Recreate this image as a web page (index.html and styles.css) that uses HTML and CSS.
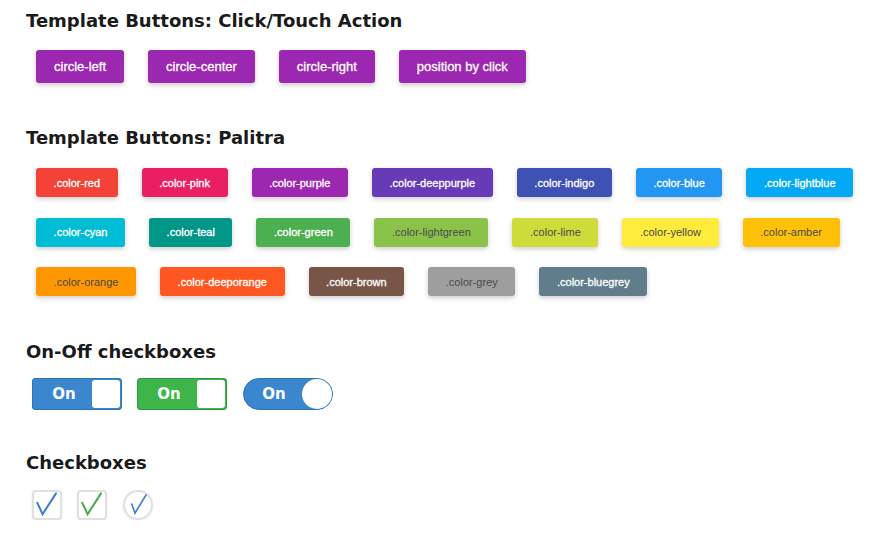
FILE: index.html
```html
<!DOCTYPE html>
<html>
<head>
<meta charset="utf-8">
<link rel="stylesheet" href="styles.css">
</head>
<body>
<div class="page">
  <h2 class="title t1">Template Buttons: Click/Touch Action</h2>
  <div class="actions">
    <span class="btn">circle-left</span>
    <span class="btn">circle-center</span>
    <span class="btn">circle-right</span>
    <span class="btn">position by click</span>
  </div>

  <h2 class="title t2">Template Buttons: Palitra</h2>
  <div class="palette">
    <div class="prow">
      <span class="pb red">.color-red</span>
      <span class="pb pink">.color-pink</span>
      <span class="pb purple">.color-purple</span>
      <span class="pb deeppurple">.color-deeppurple</span>
      <span class="pb indigo">.color-indigo</span>
      <span class="pb blue">.color-blue</span>
      <span class="pb lightblue">.color-lightblue</span>
    </div>
    <div class="prow">
      <span class="pb cyan">.color-cyan</span>
      <span class="pb teal">.color-teal</span>
      <span class="pb green">.color-green</span>
      <span class="pb lightgreen dark">.color-lightgreen</span>
      <span class="pb lime dark">.color-lime</span>
      <span class="pb yellow dark">.color-yellow</span>
      <span class="pb amber dark">.color-amber</span>
    </div>
    <div class="prow">
      <span class="pb orange dark">.color-orange</span>
      <span class="pb deeporange">.color-deeporange</span>
      <span class="pb brown">.color-brown</span>
      <span class="pb grey dark">.color-grey</span>
      <span class="pb bluegrey">.color-bluegrey</span>
    </div>
  </div>

  <h2 class="title t3">On-Off checkboxes</h2>
  <div class="toggles">
    <div class="toggle tblue"><span class="tlabel">On</span><span class="knob"></span></div>
    <div class="toggle tgreen"><span class="tlabel">On</span><span class="knob"></span></div>
    <div class="toggle tblue round"><span class="tlabel">On</span><span class="knob"></span></div>
  </div>

  <h2 class="title t4">Checkboxes</h2>
  <div class="checks">
    <div class="cb">
      <svg width="30" height="30" viewBox="0 0 30 30"><path d="M5.3 12.8 L10.6 24.2 L24 3.4" fill="none" stroke="#3d7ccc" stroke-width="2" stroke-linecap="round" stroke-linejoin="miter"/></svg>
    </div>
    <div class="cb">
      <svg width="30" height="30" viewBox="0 0 30 30"><path d="M5.3 12.8 L10.6 24.2 L24 3.4" fill="none" stroke="#48a84c" stroke-width="2" stroke-linecap="round" stroke-linejoin="miter"/></svg>
    </div>
    <div class="cb circle">
      <svg width="30" height="30" viewBox="0 0 30 30"><path d="M8.7 14 L12 23.2 L23 5" fill="none" stroke="#3d7ccc" stroke-width="1.6" stroke-linecap="round" stroke-linejoin="miter"/></svg>
    </div>
  </div>
</div>
</body>
</html>
```

FILE: styles.css
```css
html, body {
  margin: 0;
  padding: 0;
  background: #ffffff;
}

.page {
  padding-top: 10px;
  font-family: "Liberation Sans", Arial, sans-serif;
}

.title {
  margin: 0 0 0 26px;
  font-family: "DejaVu Sans", Verdana, sans-serif;
  font-weight: bold;
  font-size: 18px;
  line-height: 21px;
  color: #1a1a1a;
}

.t2 { margin-top: 44px; }
.t3 { margin-top: 45px; }
.t4 { margin-top: 42px; }

.actions {
  display: flex;
  gap: 24px;
  margin: 19px 0 0 36px;
}

.btn {
  display: flex;
  align-items: center;
  height: 33px;
  padding: 0 18px;
  background: #9c27b0;
  color: #ffffff;
  font-size: 13px;
  border-radius: 3px;
  box-shadow: 0 2px 5px rgba(0, 0, 0, 0.22);
  -webkit-text-stroke: 0.3px #ffffff;
}

.palette {
  display: flex;
  flex-direction: column;
  gap: 20.5px;
  margin: 20px 0 0 36px;
}

.prow {
  display: flex;
  gap: 24px;
}

.pb {
  display: flex;
  align-items: center;
  height: 29px;
  padding: 0 17.6px;
  font-size: 11px;
  color: #ffffff;
  border-radius: 3px;
  box-shadow: 0 2px 5px rgba(0, 0, 0, 0.2);
  -webkit-text-stroke: 0.3px #ffffff;
}

.pb.dark {
  color: #4a4a4a;
  -webkit-text-stroke: 0;
}

.red { background: #f44336; }
.pink { background: #e91e63; }
.purple { background: #9c27b0; }
.deeppurple { background: #673ab7; }
.indigo { background: #3f51b5; }
.blue { background: #2196f3; }
.lightblue { background: #03a9f4; }
.cyan { background: #00bcd4; }
.teal { background: #009688; }
.green { background: #4caf50; }
.lightgreen { background: #8bc34a; }
.lime { background: #cddc39; }
.yellow { background: #ffeb3b; }
.amber { background: #ffc107; }
.orange { background: #ff9800; }
.deeporange { background: #ff5722; }
.brown { background: #795548; }
.grey { background: #9e9e9e; }
.bluegrey { background: #607d8b; }

.toggles {
  display: flex;
  gap: 15px;
  margin: 16px 0 0 32px;
}

.toggle {
  box-sizing: border-box;
  width: 90px;
  height: 32px;
  display: flex;
  align-items: center;
  padding: 1px;
  border: 1px solid;
  border-radius: 3px;
}

.tblue {
  background: #3a87cf;
  border-color: #2f73b3;
}

.tgreen {
  background: #3db54a;
  border-color: #31983d;
}

.tlabel {
  flex: 1;
  text-align: center;
  padding-left: 2px;
  font-family: "DejaVu Sans", Verdana, sans-serif;
  font-weight: bold;
  font-size: 15px;
  color: #ffffff;
}

.knob {
  width: 28px;
  height: 28px;
  background: #ffffff;
  border-radius: 3px;
}

.toggle.round {
  border-radius: 16px;
  padding: 0;
  margin-left: 1px;
}

.toggle.round .knob {
  width: 30px;
  height: 30px;
  border-radius: 50%;
  box-sizing: border-box;
}

.checks {
  display: flex;
  gap: 15px;
  margin: 17px 0 0 32px;
}

.cb {
  box-sizing: border-box;
  width: 30px;
  height: 30px;
  border: 2px solid #e0e0e0;
  border-radius: 4px;
  background: #ffffff;
  position: relative;
  box-shadow: 0 1px 3px rgba(0, 0, 0, 0.08);
}

.cb svg {
  position: absolute;
  left: -2px;
  top: -2px;
}

.cb.circle {
  border-radius: 50%;
  margin-left: 1px;
}
```
